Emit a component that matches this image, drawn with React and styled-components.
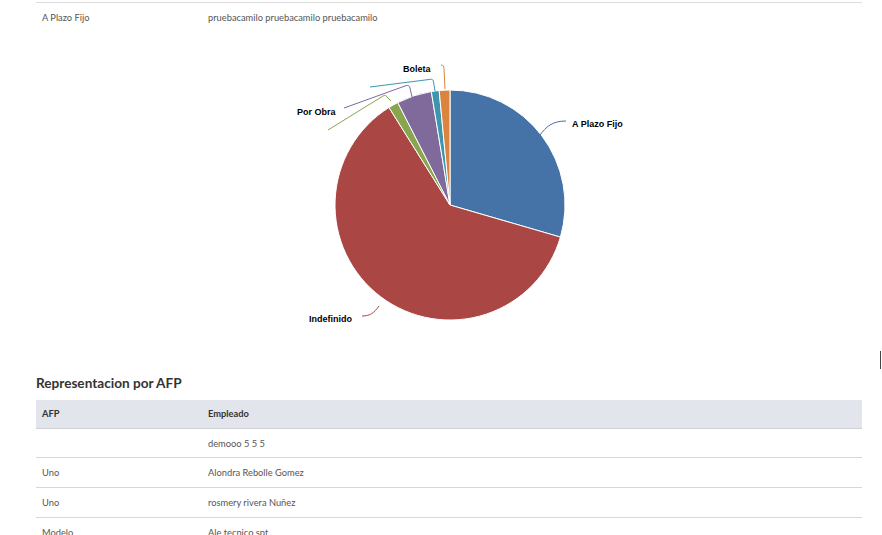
import styled, { createGlobalStyle } from 'styled-components';

const GlobalStyle = createGlobalStyle`
  html, body {
    margin: 0;
    padding: 0;
    background: #fff;
  }
  body {
    font-family: Lato, "Noto Sans", sans-serif;
    color: #555;
    overflow: hidden;
  }
`;

const tipoRows = [{ tipo: 'A Plazo Fijo', nombre: 'pruebacamilo pruebacamilo pruebacamilo' }];

const afpRows = [
  { afp: '', nombre: 'demooo 5 5 5' },
  { afp: 'Uno', nombre: 'Alondra Rebolle Gomez' },
  { afp: 'Uno', nombre: 'rosmery rivera Nuñez' },
  { afp: 'Modelo', nombre: 'Ale tecnico spt' },
];

// porcentaje por tipo de contrato, en el orden que los pinta el grafico
const slices = [
  { name: 'A Plazo Fijo', value: 29.5, color: '#4572A7' },
  { name: 'Indefinido', value: 61.6, color: '#AA4643' },
  { name: 'Honorarios', value: 1.4, color: '#89A54E' },
  { name: 'Por Obra', value: 4.9, color: '#80699B' },
  { name: 'Part Time', value: 1.1, color: '#3D96AE' },
  { name: 'Boleta', value: 1.5, color: '#DB843D' },
];

const connectors = [
  { color: '#4572A7', d: 'M540 135 C546 127 552 121 566 121' },
  { color: '#AA4643', d: 'M379 306 C374 313 370 316 362 316' },
  { color: '#89A54E', d: 'M391 101 L387 97 C386 95 385 95 383 96 L328 130' },
  { color: '#80699B', d: 'M412 97 L410 88 C409 85 408 85 405 86 L344 108' },
  { color: '#3D96AE', d: 'M435 91 L433.5 82 C433 79 432 79 429 79.5 L370 87' },
  { color: '#DB843D', d: 'M445 89 L444 69 C444 66 443 65 441 65' },
];

const labels = [
  { text: 'A Plazo Fijo', x: 572, y: 126.5 },
  { text: 'Indefinido', x: 309, y: 321.5 },
  { text: 'Por Obra', x: 297, y: 114.5 },
  { text: 'Boleta', x: 403, y: 71.5 },
];

const CX = 450;
const CY = 205;
const R = 115;

function slicePath(start, end) {
  const a0 = (start - 90) * Math.PI / 180;
  const a1 = (end - 90) * Math.PI / 180;
  const x0 = CX + R * Math.cos(a0);
  const y0 = CY + R * Math.sin(a0);
  const x1 = CX + R * Math.cos(a1);
  const y1 = CY + R * Math.sin(a1);
  const large = end - start > 180 ? 1 : 0;
  return `M${CX} ${CY} L${x0} ${y0} A${R} ${R} 0 ${large} 1 ${x1} ${y1} Z`;
}

const PieChart = () => {
  const total = slices.reduce((s, p) => s + p.value, 0);
  let acc = 0;
  return (
    <ChartSvg width="826" height="340" viewBox="36 32 826 340">
      {slices.map((s) => {
        const start = (acc / total) * 360;
        acc += s.value;
        const end = (acc / total) * 360;
        return <path key={s.name} d={slicePath(start, end)} fill={s.color} stroke="#fff" strokeWidth="1" strokeLinejoin="round" />;
      })}
      {connectors.map((c, i) => (
        <path key={i} d={c.d} fill="none" stroke={c.color} strokeWidth="1" />
      ))}
      {labels.map((l) => (
        <ChartLabel key={l.text} x={l.x} y={l.y}>{l.text}</ChartLabel>
      ))}
    </ChartSvg>
  );
};

const App = () => {
  return (
    <>
      <GlobalStyle />
      <Page>
        <Table>
          <tbody>
            {tipoRows.map((r, i) => (
              <Tr key={i} $top>
                <Td $first>{r.tipo}</Td>
                <Td>{r.nombre}</Td>
              </Tr>
            ))}
          </tbody>
        </Table>

        <PieChart />

        <Title>Representacion por AFP</Title>
        <Table>
          <thead>
            <tr>
              <Th $first>AFP</Th>
              <Th>Empleado</Th>
            </tr>
          </thead>
          <tbody>
            {afpRows.map((r, i) => (
              <Tr key={i}>
                <Td $first>{r.afp}</Td>
                <Td>{r.nombre}</Td>
              </Tr>
            ))}
          </tbody>
        </Table>
      </Page>
      <ScrollThumb />
    </>
  );
};

export default App;

const Page = styled.div`
  width: 826px;
  padding: 2px 0 0 36px;
`;

const Table = styled.table`
  width: 100%;
  border-collapse: collapse;
  table-layout: fixed;
`;

const Tr = styled.tr`
  border-top: ${(p) => (p.$top ? '1px solid #dcdcdc' : 'none')};
  border-bottom: ${(p) => (p.$top ? 'none' : '1px solid #d8d8d8')};
`;

const Td = styled.td`
  width: ${(p) => (p.$first ? '166px' : 'auto')};
  height: 29.7px;
  padding: 0 6px;
  box-sizing: border-box;
  font-size: 9.3px;
  color: #555;
  vertical-align: middle;
  white-space: nowrap;
`;

const Th = styled.th`
  width: ${(p) => (p.$first ? '166px' : 'auto')};
  height: 28px;
  padding: 0 6px;
  box-sizing: border-box;
  background: #e2e5ec;
  border-bottom: 1px solid #cfd1d5;
  font-size: 9.3px;
  font-weight: 700;
  color: #333;
  text-align: left;
  vertical-align: middle;
`;

const ChartSvg = styled.svg`
  display: block;
`;

const ChartLabel = styled.text`
  font-family: "Liberation Sans", Arial, sans-serif;
  font-size: 9px;
  font-weight: 700;
  fill: #000;
  paint-order: stroke;
  stroke: rgba(255, 255, 255, 0.7);
  stroke-width: 1.5px;
`;

const Title = styled.h2`
  margin: 2px 0 8px;
  font-size: 13.6px;
  line-height: 18px;
  font-weight: 700;
  color: #333;
`;

const ScrollThumb = styled.div`
  position: fixed;
  left: 880px;
  top: 351px;
  width: 1px;
  height: 18px;
  background: #444;
`;
